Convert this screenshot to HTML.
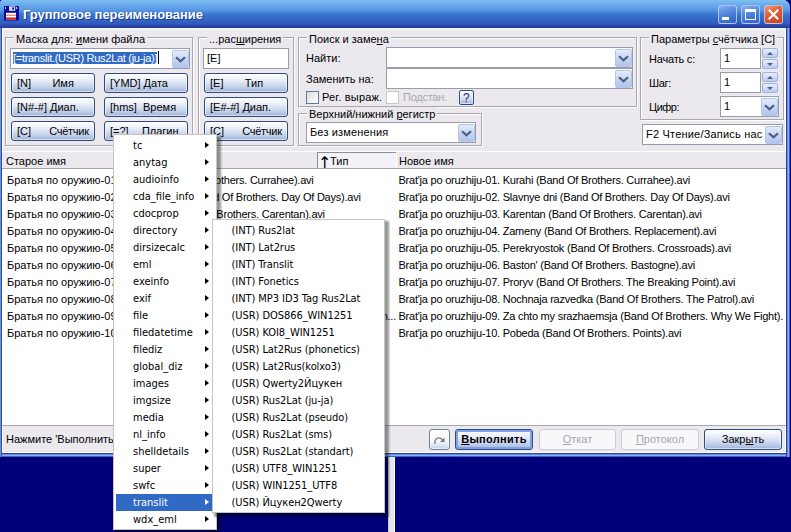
<!DOCTYPE html>
<html lang="ru"><head><meta charset="utf-8"><title>Групповое переименование</title>
<style>
html,body{margin:0;padding:0}
body{width:791px;height:532px;overflow:hidden;position:relative;background:#00007B;font-family:"Liberation Sans",sans-serif;font-size:11px;color:#000;line-height:13px}
*{box-sizing:border-box}
.a{position:absolute}
#win{left:0;top:0;width:790px;height:457px;border-top-right-radius:7px;border-top-left-radius:3px;background:linear-gradient(90deg,#6890E0 0,#6890E0 1px,#30509E 1px,#30509E 2px,transparent 2px,transparent 786px,#2C4496 786px,#2C4496 787px,#6088E8 787px,#6088E8 788px,#88B0FF 788px,#88B0FF 789px,#3C64BE 789px),linear-gradient(#fff 0,#fff 453px,#2C4496 453px,#2C4496 454px,#6088E8 454px,#6088E8 455px,#88B0FF 455px,#88B0FF 456px,#3C64BE 456px)}
#title{left:0;top:0;width:790px;height:28px;border-top-right-radius:7px;border-top-left-radius:3px;background:linear-gradient(#7EC0F0 0,#68A8EC 5px,#5898E4 10px,#4A8ADC 12px,#3A78D0 14px,#3470CC 16px,#3466C4 20px,#3058BC 24px,#2A44AA 26px,#273C9C 27px,#273C9C 28px)}
#ttext{left:23px;top:7px;font-weight:bold;font-size:13px;line-height:16px;color:#fff;white-space:pre;text-shadow:1px 1px 0 #1A3A90;letter-spacing:-.05px}
#client{left:2px;top:28px;width:784px;height:425px;background:#EBE9ED;border:1px solid #fff;border-top:2px solid #F2F5F6}
.gb{position:absolute;border:1px solid #A9A7AD;box-shadow:1px 1px 0 #fff,inset 1px 1px 0 #fff}
.gb>.l{position:absolute;top:-6px;left:8px;padding:0 2px;background:#EBE9ED;white-space:pre;line-height:14px}
.ed{position:absolute;background:#fff;border:1px solid #9A9CAA;white-space:pre;overflow:hidden;padding:3px 0 0 3px}
.btn{position:absolute;border:1px solid #2C4C7C;border-radius:3px;background:linear-gradient(#FFFFFF 0,#E8EDF8 35%,#C6D3EA 70%,#9FB4DA 100%);white-space:pre;padding:3px 0 0 5px;height:20px;line-height:13px;box-shadow:inset 0 0 0 1px rgba(255,255,255,.55)}
.btn.dis{border-color:#CDCBD3;background:#F8F8FA;color:#A7A6AA;box-shadow:none}
.dd{position:absolute;width:17px;height:18px;border:1px solid #B4C6E8;border-radius:2px;background:linear-gradient(#E4ECFC,#C2D2F4 60%,#B0C4F0)}
.dd svg{position:absolute;left:2px;top:5px}
.sp{position:absolute;width:16px;height:10px;border:1px solid #9FB4DC;border-radius:2px;background:linear-gradient(#E8EEFC,#BCCCF0)}
.sp b{position:absolute;left:4px;top:3px;width:0;height:0;border-left:3px solid transparent;border-right:3px solid transparent}
.sp .up{border-bottom:3px solid #4D6185}
.sp .dn{border-top:3px solid #4D6185}
.lbl{position:absolute;white-space:pre}
.cb{position:absolute;width:13px;height:13px;border:1px solid #5B7BA6;background:linear-gradient(135deg,#DCDCD7,#fff)}
.cb.dis{border-color:#CAC8BB;background:#fff}
.hd{color:#000}
.r{line-height:13px;letter-spacing:-.23px}
.menu{position:absolute;background:#fff;border:1px solid #C6C4BE;padding:2px;box-shadow:3px 3px 2px 1px rgba(0,0,0,.4);font-family:"DejaVu Sans Condensed","Liberation Sans",sans-serif;font-size:11px}
.mi{position:relative;height:17px;line-height:16px;padding-left:16px;white-space:pre}
.mi.m2{padding-left:16.5px;line-height:17px;letter-spacing:-.06px}
.m1 .mi{line-height:18px;padding-left:17px}
.m1 .mi i{right:5px}
.mi i{position:absolute;right:4px;top:4.5px;width:0;height:0;border-left:4px solid #000;border-top:3.5px solid transparent;border-bottom:3.5px solid transparent}
.mi.sel{background:#316AC5;color:#fff}
.mi.sel i{border-left-color:#fff}
u{text-decoration:underline}
</style></head><body>
<div id="win" class="a"></div>
<div id="title" class="a"></div>
<div id="client" class="a"></div>
<!-- icon -->
<svg class="a" style="left:4px;top:6px" width="16" height="16" viewBox="0 0 16 16">
 <path d="M0 0H14L15 1V14.5H0Z" fill="#0C0CA0"/>
 <rect x="5" y="0.3" width="6.2" height="4.5" fill="#D0DCF6"/><rect x="8.2" y="1.4" width="1.8" height="2.2" fill="#0C0CA0"/>
 <rect x="1" y="1" width="1" height="2" fill="#C8D4F4"/><rect x="12" y="1" width="1.2" height="2" fill="#C8D4F4"/>
 <rect x="2" y="6.8" width="10" height="6.7" fill="#fff"/>
 <rect x="2" y="8.7" width="10" height="0.9" fill="#C85030"/><rect x="2" y="11.5" width="10" height="2" fill="#E01818"/>
</svg>
<div id="ttext" class="a">Групповое переименование</div>
<!-- caption buttons -->
<div class="a" style="left:718px;top:5px;width:19px;height:19px;border:1px solid rgba(190,215,250,.8);border-radius:3px;background:linear-gradient(160deg,#88B2F2,#4A80DA 50%,#3460C4)"><div class="a" style="left:3px;top:11px;width:7px;height:3px;background:#fff"></div></div>
<div class="a" style="left:741px;top:5px;width:19px;height:19px;border:1px solid rgba(190,215,250,.8);border-radius:3px;background:linear-gradient(160deg,#88B2F2,#4A80DA 50%,#3460C4)"><div class="a" style="left:3px;top:3px;width:11px;height:11px;border:1px solid #fff;border-top-width:3px"></div></div>
<div class="a" style="left:764px;top:5px;width:19px;height:19px;border:1px solid rgba(190,215,250,.8);border-radius:3px;background:linear-gradient(150deg,#EE9C7C,#E05C34 45%,#C8401C)"><svg class="a" style="left:3px;top:3px" width="11" height="11" viewBox="0 0 11 11"><path d="M1.5 1.5L9.5 9.5M9.5 1.5L1.5 9.5" stroke="#fff" stroke-width="2.2" stroke-linecap="square"/></svg></div>

<!-- group 1 -->
<div class="gb" style="left:5px;top:37px;width:188px;height:109px"><span class="l">Маска для: <u>и</u>мени файла</span></div>
<div class="ed" style="left:10px;top:48px;width:180px;height:21px;padding-left:2px"><span style="background:#316AC5;color:#fff;display:inline-block;height:12px;line-height:12px;letter-spacing:-.29px;vertical-align:top;margin-top:0">[=translit.(USR) Rus2Lat (ju-ja)]</span></div>
<div class="a" style="left:158px;top:51px;width:1px;height:13px;background:#000"></div>
<div class="dd" style="left:172px;top:50px"><svg width="11" height="7" viewBox="0 0 11 7"><path d="M1 1.2L5.5 5.2L10 1.2" fill="none" stroke="#4D5E7E" stroke-width="2.2"/></svg></div>
<div class="btn" style="left:11px;top:73px;width:84px">[N]       Имя</div>
<div class="btn" style="left:104px;top:73px;width:84px">[YMD] Дата</div>
<div class="btn" style="left:11px;top:97px;width:84px">[N#-#] Диап.</div>
<div class="btn" style="left:104px;top:97px;width:84px">[hms]  Время</div>
<div class="btn" style="left:11px;top:121px;width:84px">[C]     <span style="padding-left:3px;letter-spacing:-.3px">Счётчик</span></div>
<div class="btn" style="left:104px;top:121px;width:84px">[=?]    <span style="padding-left:1px">Плагин</span></div>
<!-- group 2 -->
<div class="gb" style="left:198px;top:37px;width:96px;height:109px"><span class="l" style="left:8px">...рас<u>ш</u>ирения</span></div>
<div class="ed" style="left:203px;top:48px;width:86px;height:21px">[E]</div>
<div class="btn" style="left:204px;top:73px;width:84px">[E]       Тип</div>
<div class="btn" style="left:204px;top:97px;width:84px">[E#-#] Диап.</div>
<div class="btn" style="left:204px;top:121px;width:84px">[C]     <span style="padding-left:3px;letter-spacing:-.3px">Счётчик</span></div>
<!-- group 3 -->
<div class="gb" style="left:298px;top:37px;width:339px;height:70px"><span class="l">Поиск и заме<u>н</u>а</span></div>
<div class="lbl" style="left:306px;top:52px">Найти:</div>
<div class="lbl" style="left:306px;top:73px">Заменить на:</div>
<div class="ed" style="left:386px;top:47px;width:247px;height:21px"></div>
<div class="dd" style="left:615px;top:49px;height:18px"><svg width="11" height="7" viewBox="0 0 11 7"><path d="M1 1.2L5.5 5.2L10 1.2" fill="none" stroke="#4D5E7E" stroke-width="2.2"/></svg></div>
<div class="ed" style="left:386px;top:68px;width:247px;height:21px"></div>
<div class="dd" style="left:615px;top:70px;height:18px"><svg width="11" height="7" viewBox="0 0 11 7"><path d="M1 1.2L5.5 5.2L10 1.2" fill="none" stroke="#4D5E7E" stroke-width="2.2"/></svg></div>
<div class="cb" style="left:306px;top:91px"></div>
<div class="lbl" style="left:322px;top:91px;letter-spacing:.2px">Рег. выраж.</div>
<div class="cb dis" style="left:386px;top:91px"></div>
<div class="lbl" style="left:403px;top:91px;letter-spacing:-.25px;color:#A9A7AD">Подстан.</div>
<div class="btn" style="left:459px;top:90px;width:15px;height:15px;padding:0 0 0 3px;border-radius:2px;color:#1A2A5A;font-size:12px;line-height:12px;padding:1px 0 0 3px">?</div>
<!-- group 4 -->
<div class="gb" style="left:298px;top:113px;width:184px;height:33px"><span class="l" style="top:-7px">Верхний/нижний <u>р</u>егистр</span></div>
<div class="ed" style="left:306px;top:122px;width:170px;height:21px;letter-spacing:.15px">Без изменения</div>
<div class="dd" style="left:458px;top:124px"><svg width="11" height="7" viewBox="0 0 11 7"><path d="M1 1.2L5.5 5.2L10 1.2" fill="none" stroke="#4D5E7E" stroke-width="2.2"/></svg></div>
<!-- group 5 -->
<div class="gb" style="left:640px;top:37px;width:144px;height:83px"><span class="l">Параметры <u>с</u>чётчика [C]</span></div>
<div class="lbl" style="left:649px;top:53px;letter-spacing:-.2px">Начать с:</div>
<div class="lbl" style="left:649px;top:77px;letter-spacing:-.3px">Шаг:</div>
<div class="lbl" style="left:649px;top:101px;letter-spacing:-.5px">Цифр:</div>
<div class="ed" style="left:720px;top:48px;width:41px;height:21px">1</div>
<div class="sp" style="left:762px;top:48px"><b class="up"></b></div><div class="sp" style="left:762px;top:59px"><b class="dn"></b></div>
<div class="ed" style="left:720px;top:72px;width:41px;height:21px">1</div>
<div class="sp" style="left:762px;top:72px"><b class="up"></b></div><div class="sp" style="left:762px;top:83px"><b class="dn"></b></div>
<div class="ed" style="left:720px;top:96px;width:59px;height:21px">1</div>
<div class="dd" style="left:761px;top:98px"><svg width="11" height="7" viewBox="0 0 11 7"><path d="M1 1.2L5.5 5.2L10 1.2" fill="none" stroke="#4D5E7E" stroke-width="2.2"/></svg></div>
<div class="ed" style="left:642px;top:124px;width:141px;height:21px;letter-spacing:.2px">F2 Чтение/Запись нас</div>
<div class="dd" style="left:765px;top:126px"><svg width="11" height="7" viewBox="0 0 11 7"><path d="M1 1.2L5.5 5.2L10 1.2" fill="none" stroke="#4D5E7E" stroke-width="2.2"/></svg></div>

<div class="a" style="left:2px;top:152px;width:784px;height:274px;background:#fff;border-bottom:1px solid #A9A7AD"></div>
<div class="a" style="left:2px;top:151px;width:784px;height:18px;background:#EBE9ED;border-top:1px solid #fff;border-bottom:1px solid #A9A7AD"></div>
<div class="a" style="left:317px;top:152px;width:79px;height:16px;background:#F3F2F6;border-top:1px solid #8E8C94;border-left:1px solid #8E8C94"></div>

<div class="a" style="left:396px;top:153px;width:1px;height:15px;background:#fff"></div>
<div class="lbl hd" style="left:6px;top:155px">Старое имя</div>
<div class="lbl hd" style="left:320px;top:155px"><span style="font-family:'DejaVu Sans','Liberation Sans',sans-serif;font-size:16px;line-height:14px;display:inline-block;width:9px;margin-left:-2px;vertical-align:top;text-align:center;position:relative;top:.5px">↑</span><span style="margin-left:3px">Тип</span></div>
<div class="lbl hd" style="left:399px;top:155px">Новое имя</div>
<div class="lbl r" style="left:7px;top:174px"><span style="letter-spacing:0">Братья по оружию-01.</span> Курахи (Band Of Brothers. Currahee).avi</div>
<div class="lbl r" style="left:398.5px;top:174px;width:384.5px;overflow:hidden">Brat'ja po oruzhiju-01. Kurahi (Band Of Brothers. Currahee).avi</div>
<div class="lbl r" style="left:7px;top:191px"><span style="letter-spacing:0">Братья по оружию-02.</span> Славные дни (Band Of Brothers. Day Of Days).avi</div>
<div class="lbl r" style="left:398.5px;top:191px;width:384.5px;overflow:hidden">Brat'ja po oruzhiju-02. Slavnye dni (Band Of Brothers. Day Of Days).avi</div>
<div class="lbl r" style="left:7px;top:208px"><span style="letter-spacing:0">Братья по оружию-03.</span> Карентан (Band Of Brothers. Carentan).avi</div>
<div class="lbl r" style="left:398.5px;top:208px;width:384.5px;overflow:hidden">Brat'ja po oruzhiju-03. Karentan (Band Of Brothers. Carentan).avi</div>
<div class="lbl r" style="left:7px;top:225px"><span style="letter-spacing:0">Братья по оружию-04.</span> Замены (Band Of Brothers. Replacement).avi</div>
<div class="lbl r" style="left:398.5px;top:225px;width:384.5px;overflow:hidden">Brat'ja po oruzhiju-04. Zameny (Band Of Brothers. Replacement).avi</div>
<div class="lbl r" style="left:7px;top:242px"><span style="letter-spacing:0">Братья по оружию-05.</span> Перекрёсток (Band Of Brothers. Crossroads).avi</div>
<div class="lbl r" style="left:398.5px;top:242px;width:384.5px;overflow:hidden">Brat'ja po oruzhiju-05. Perekryostok (Band Of Brothers. Crossroads).avi</div>
<div class="lbl r" style="left:7px;top:259px"><span style="letter-spacing:0">Братья по оружию-06.</span> Бастонь (Band Of Brothers. Bastogne).avi</div>
<div class="lbl r" style="left:398.5px;top:259px;width:384.5px;overflow:hidden">Brat'ja po oruzhiju-06. Baston' (Band Of Brothers. Bastogne).avi</div>
<div class="lbl r" style="left:7px;top:276px"><span style="letter-spacing:0">Братья по оружию-07.</span> Прорыв (Band Of Brothers. The Breaking Point).avi</div>
<div class="lbl r" style="left:398.5px;top:276px;width:384.5px;overflow:hidden">Brat'ja po oruzhiju-07. Proryv (Band Of Brothers. The Breaking Point).avi</div>
<div class="lbl r" style="left:7px;top:293px"><span style="letter-spacing:0">Братья по оружию-08.</span> Ночная разведка (Band Of Brothers. The Patrol).avi</div>
<div class="lbl r" style="left:398.5px;top:293px;width:384.5px;overflow:hidden">Brat'ja po oruzhiju-08. Nochnaja razvedka (Band Of Brothers. The Patrol).avi</div>
<div class="lbl r" style="left:7px;top:310px;width:388px;overflow:hidden"><span style="letter-spacing:0">Братья по оружию-09.</span> За что мы сражаемся (Band Of Brothers. Why We Fig</div>
<div class="lbl r" style="left:380px;top:310px;width:16px;background:#fff;text-align:right">n...</div>
<div class="lbl r" style="left:398.5px;top:310px;width:384.5px;overflow:hidden">Brat'ja po oruzhiju-09. Za chto my srazhaemsja (Band Of Brothers. Why We Fight).avi</div>
<div class="lbl r" style="left:7px;top:327px"><span style="letter-spacing:0">Братья по оружию-10.</span> Победа (Band Of Brothers. Points).avi</div>
<div class="lbl r" style="left:398.5px;top:327px;width:384.5px;overflow:hidden">Brat'ja po oruzhiju-10. Pobeda (Band Of Brothers. Points).avi</div>
<div class="lbl" style="left:6px;top:433px">Нажмите 'Выполнить' для запуска</div>
<div class="btn" style="left:429px;top:429px;width:21px;height:21px;padding:0;border-color:#6E7E9E;background:linear-gradient(#fff,#F4F6FA 60%,#C8D4EA)"><svg class="a" style="left:3px;top:5px" width="14" height="11" viewBox="0 0 14 11"><path d="M2 9C1 4 5 2 8 3.5L10 5.5" fill="none" stroke="#7A7A82" stroke-width="1.2"/><path d="M11.5 2.5V7H7Z" fill="#7A7A82"/></svg></div>
<div class="btn" style="left:455px;top:429px;width:78px;height:21px;padding:3px 0 0 0;text-align:center;font-weight:bold;letter-spacing:.3px;box-shadow:inset 0 0 0 2px #7CA2EA"><u>В</u>ыполнить</div>
<div class="btn dis" style="left:539px;top:429px;width:77px;height:21px;padding:3px 0 0 0;text-align:center"><u>О</u>ткат</div>
<div class="btn dis" style="left:621px;top:429px;width:78px;height:21px;padding:3px 0 0 0;text-align:center"><u>П</u>ротокол</div>
<div class="btn" style="left:704px;top:429px;width:78px;height:21px;padding:3px 0 0 0;text-align:center">Закр<u>ы</u>ть</div>
<div class="a" style="left:388px;top:457px;width:7px;height:75px;background:#E6E6EA;border-left:1px solid #C8C8CC;border-right:1px solid #fff"></div>

<div class="menu m1" style="left:113px;top:134px;width:104px;height:396px">
<div class="mi">tc<i></i></div>
<div class="mi">anytag<i></i></div>
<div class="mi">audioinfo<i></i></div>
<div class="mi">cda_file_info<i></i></div>
<div class="mi">cdocprop<i></i></div>
<div class="mi">directory<i></i></div>
<div class="mi">dirsizecalc<i></i></div>
<div class="mi">eml<i></i></div>
<div class="mi">exeinfo<i></i></div>
<div class="mi">exif<i></i></div>
<div class="mi">file<i></i></div>
<div class="mi">filedatetime<i></i></div>
<div class="mi">filediz<i></i></div>
<div class="mi">global_diz<i></i></div>
<div class="mi">images<i></i></div>
<div class="mi">imgsize<i></i></div>
<div class="mi">media<i></i></div>
<div class="mi">nl_info<i></i></div>
<div class="mi">shelldetails<i></i></div>
<div class="mi">super<i></i></div>
<div class="mi">swfc<i></i></div>
<div class="mi sel">translit<i></i></div>
<div class="mi">wdx_eml<i></i></div>
</div>
<div class="menu" style="left:212px;top:219px;width:173px;height:294px">
<div class="mi m2">(INT) Rus2lat</div>
<div class="mi m2">(INT) Lat2rus</div>
<div class="mi m2">(INT) Translit</div>
<div class="mi m2">(INT) Fonetics</div>
<div class="mi m2">(INT) MP3 ID3 Tag Rus2Lat</div>
<div class="mi m2">(USR) DOS866_WIN1251</div>
<div class="mi m2">(USR) KOI8_WIN1251</div>
<div class="mi m2">(USR) Lat2Rus (phonetics)</div>
<div class="mi m2">(USR) Lat2Rus(kolxo3)</div>
<div class="mi m2">(USR) Qwerty2Йцукен</div>
<div class="mi m2">(USR) Rus2Lat (ju-ja)</div>
<div class="mi m2">(USR) Rus2Lat (pseudo)</div>
<div class="mi m2">(USR) Rus2Lat (sms)</div>
<div class="mi m2">(USR) Rus2Lat (standart)</div>
<div class="mi m2">(USR) UTF8_WIN1251</div>
<div class="mi m2">(USR) WIN1251_UTF8</div>
<div class="mi m2">(USR) Йцукен2Qwerty</div>
</div>
</body></html>
